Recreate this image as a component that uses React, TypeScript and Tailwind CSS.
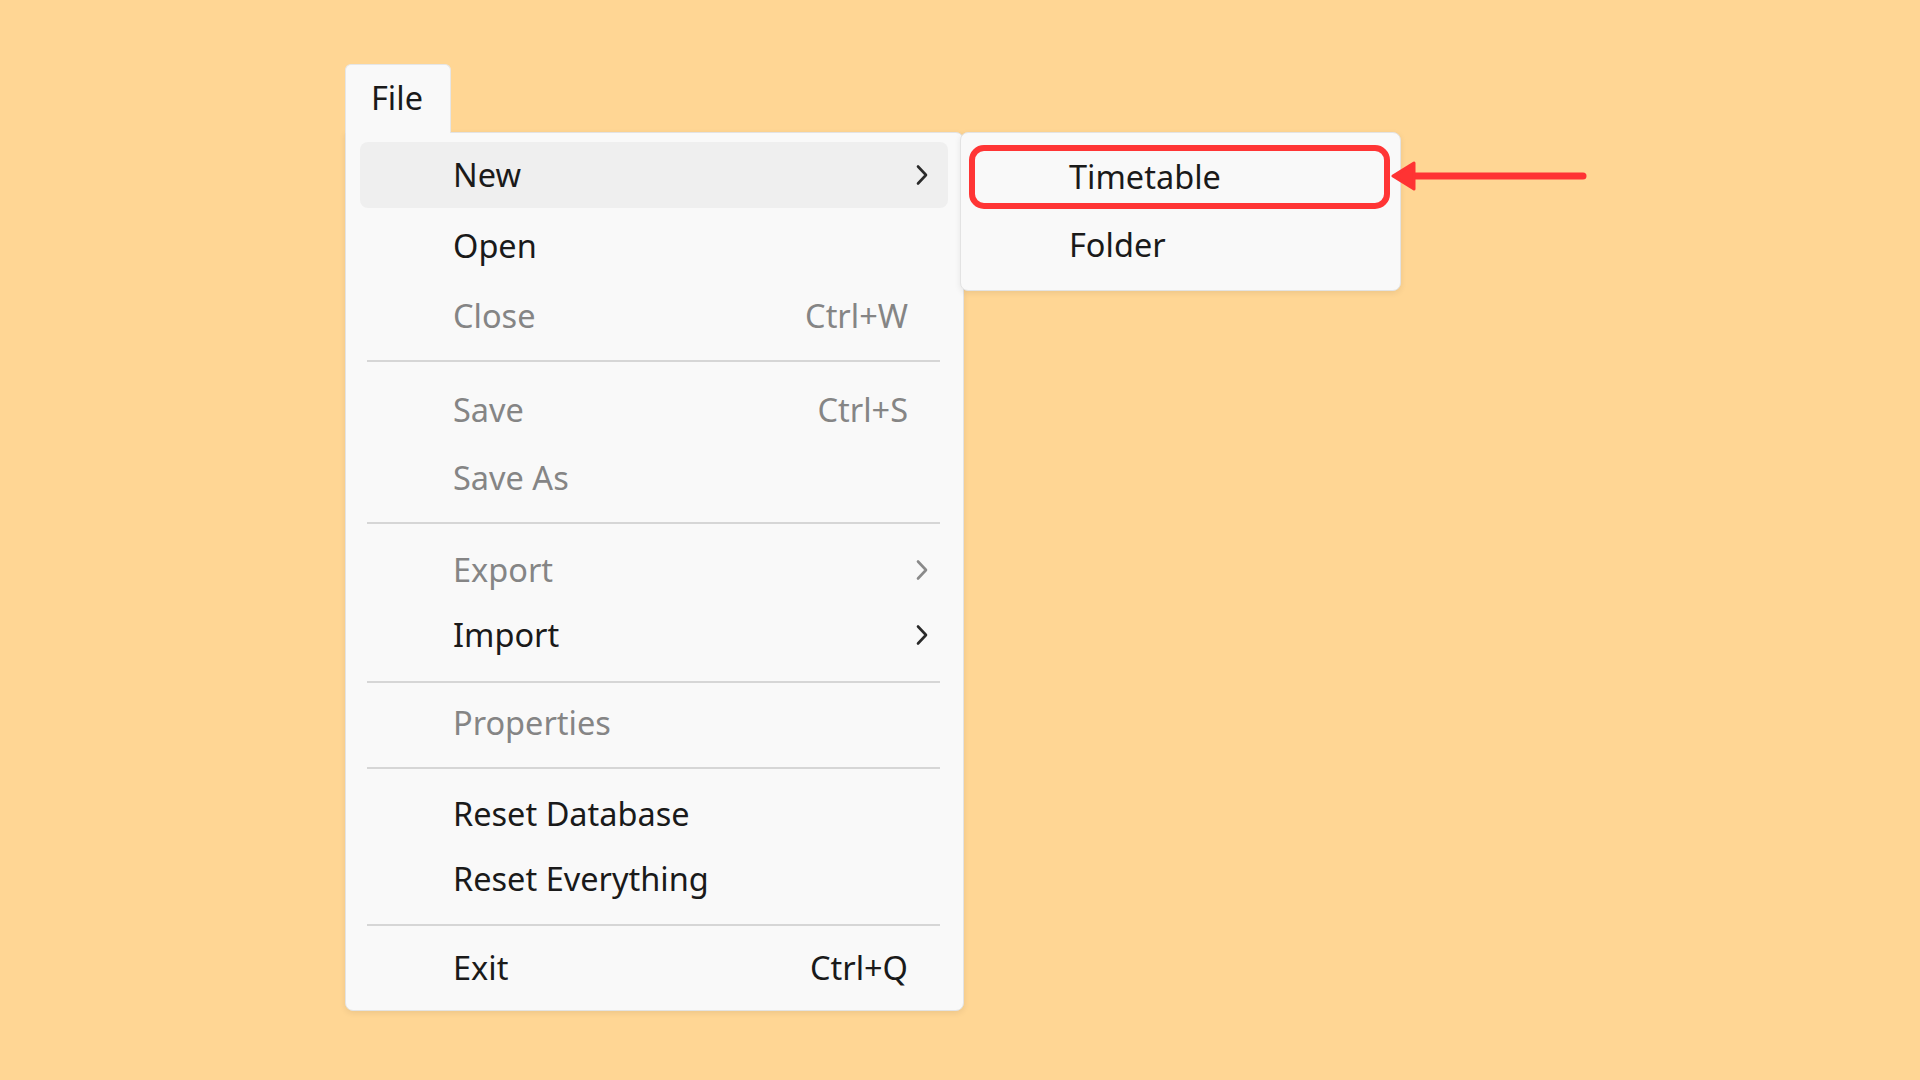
import React from "react";

const FONT = { fontFamily: '"Noto Sans", "Open Sans", sans-serif' };

function Chevron({ gray }: { gray?: boolean }) {
  return (
    <svg width="14" height="22" viewBox="0 0 14 22" className="shrink-0">
      <path
        d="M3 2.5 L11 11 L3 19.5"
        fill="none"
        stroke={gray ? "#8a8a8a" : "#2a2a2a"}
        strokeWidth="2.6"
        strokeLinecap="round"
        strokeLinejoin="round"
      />
    </svg>
  );
}

type RowProps = {
  label: string;
  disabled?: boolean;
  shortcut?: string;
  sub?: boolean;
  active?: boolean;
  mt: string;
  h?: string;
};

function Row({ label, disabled, shortcut, sub, active, mt, h }: RowProps) {
  return (
    <div
      className={`${mt} ${h ?? "h-[64px]"} ml-[14px] mr-[15px] flex items-center rounded-lg pl-[93px] ${
        sub ? "pr-[19px]" : "pr-[40px]"
      } ${active ? "bg-[#efefef]" : ""}`}
    >
      <span
        className={`flex-1 text-[32.5px] leading-none ${
          disabled ? "text-[#858585]" : "text-[#1a1a1a]"
        }`}
      >
        {label}
      </span>
      {shortcut && (
        <span
          className={`text-[32.5px] leading-none ${
            disabled ? "text-[#858585]" : "text-[#1a1a1a]"
          }`}
        >
          {shortcut}
        </span>
      )}
      {sub && <Chevron gray={disabled} />}
    </div>
  );
}

function Sep({ mt }: { mt: string }) {
  return <div className={`${mt} ml-[21px] mr-[23px] h-[2px] bg-[#d6d6d6]`} />;
}

function Arrow() {
  return (
    <svg width="196" height="32" viewBox="0 0 196 32" className="shrink-0">
      <line
        x1="22"
        y1="15"
        x2="192"
        y2="15"
        stroke="#ff3333"
        strokeWidth="7"
        strokeLinecap="round"
      />
      <polygon
        points="2,15 23,2 23,28"
        fill="#ff3333"
        stroke="#ff3333"
        strokeWidth="3"
        strokeLinejoin="round"
      />
    </svg>
  );
}

export default function App() {
  return (
    <div
      className="w-full h-screen overflow-hidden bg-[#ffd694] pl-[345px] pt-[64px]"
      style={FONT}
    >
      {/* File tab */}
      <div className="w-[106px] h-[69px] -mb-px relative z-10 bg-[#f9f9f9] rounded-t-md border border-b-0 border-[#e6e6e6] flex items-center pl-[25px] pb-[2px]">
        <span className="text-[32.5px] leading-none text-[#1a1a1a]">File</span>
      </div>

      <div className="flex items-start">
        {/* Main menu */}
        <div className="w-[619px] h-[879px] bg-[#f9f9f9] border border-[#e3e3e3] rounded-b-lg rounded-tr-lg shadow-[0_2px_6px_rgba(0,0,0,0.08)] pt-[9px] flex flex-col">
          <Row label="New" sub active mt="mt-0" h="h-[66px]" />
          <Row label="Open" mt="mt-[6px]" />
          <Row label="Close" disabled shortcut="Ctrl+W" mt="mt-[6px]" />
          <Sep mt="mt-[12px]" />
          <Row label="Save" disabled shortcut="Ctrl+S" mt="mt-[16px]" />
          <Row label="Save As" disabled mt="mt-[4px]" />
          <Sep mt="mt-[12px]" />
          <Row label="Export" disabled sub mt="mt-[14px]" />
          <Row label="Import" sub mt="mt-[1px]" />
          <Sep mt="mt-[14px]" />
          <Row label="Properties" disabled mt="mt-[8px]" />
          <Sep mt="mt-[12px]" />
          <Row label="Reset Database" mt="mt-[13px]" />
          <Row label="Reset Everything" mt="mt-[1px]" />
          <Sep mt="mt-[13px]" />
          <Row label="Exit" shortcut="Ctrl+Q" mt="mt-[10px]" />
        </div>

        {/* Submenu */}
        <div className="relative z-10 ml-[-4px] w-[441px] h-[159px] bg-[#f9f9f9] border border-[#e3e3e3] rounded-lg shadow-[0_2px_6px_rgba(0,0,0,0.08)] pt-[12px] flex flex-col">
          <div className="ml-[8px] mr-[10px] h-[64px] rounded-[15px] border-[6px] border-[#ff3535] flex items-center pl-[94px]">
            <span className="text-[32.5px] leading-none text-[#1a1a1a]">
              Timetable
            </span>
          </div>
          <div className="mt-[4px] h-[64px] flex items-center pl-[108px]">
            <span className="text-[32.5px] leading-none text-[#1a1a1a]">
              Folder
            </span>
          </div>
        </div>

        {/* Annotation arrow */}
        <div className="ml-[-10px] mt-[29px] relative z-10">
          <Arrow />
        </div>
      </div>
    </div>
  );
}
